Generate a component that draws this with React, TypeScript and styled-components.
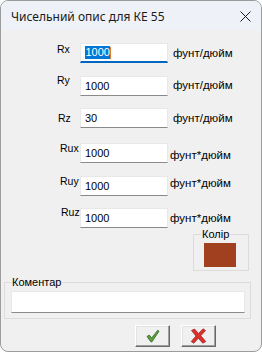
import React from "react";
import styled, { createGlobalStyle } from "styled-components";

const Global = createGlobalStyle`
  html, body { margin: 0; padding: 0; background: #ffffff; }
  * { box-sizing: border-box; }
`;

const Window = styled.div`
  width: 262px;
  height: 352px;
  border: 1px solid #9c9c9c;
  border-radius: 8px;
  overflow: hidden;
  background: #f0f0f0;
  display: flex;
  flex-direction: column;
  font-family: "Liberation Sans", Arial, sans-serif;
  font-size: 11px;
  color: #000;
`;

const TitleBar = styled.div`
  height: 29px;
  flex: none;
  background: #eef2f8;
  display: flex;
  align-items: center;
  justify-content: space-between;
  padding: 0 10px 0 10px;
`;

const Title = styled.span`
  font-family: "Noto Sans", "Open Sans", sans-serif;
  font-size: 12px;
  color: #1a1a1a;
  margin-top: 1px;
`;

const CloseIcon = styled.svg`
  width: 11px;
  height: 11px;
  margin-top: 1px;
`;

const Body = styled.div`
  flex: 1;
  display: flex;
  flex-direction: column;
  padding-top: 13px;
`;

const Row = styled.div<{ $gap: number }>`
  display: flex;
  align-items: flex-start;
  height: 20px;
  margin-top: ${(p) => p.$gap}px;
`;

const Label = styled.span<{ $x: number; $dy: number }>`
  width: 79px;
  flex: none;
  padding-left: ${(p) => p.$x - 1}px;
  margin-top: ${(p) => p.$dy}px;
  line-height: 13px;
  font-size: 10.5px;
  white-space: nowrap;
`;

const Edit = styled.div<{ $focus?: boolean; $w: number; $h: number }>`
  width: ${(p) => p.$w}px;
  height: ${(p) => p.$h}px;
  flex: none;
  background: #ffffff;
  border: 1px solid #e8e8e8;
  border-bottom: ${(p) => (p.$focus ? "2px solid #0067c0" : "1px solid #8a8a8a")};
  display: flex;
  align-items: center;
  padding-left: 4px;
  line-height: 13px;
`;

const Selected = styled.span`
  background: #0078d7;
  color: #ffffff;
  padding: 0 0.5px;
`;

const Caret = styled.span`
  display: inline-block;
  width: 1px;
  height: 12px;
  background: #e07a2a;
`;

const Unit = styled.span<{ $x: number; $dy: number }>`
  margin-left: ${(p) => p.$x - 168}px;
  margin-top: ${(p) => p.$dy}px;
  font-size: 11.5px;
  line-height: 13px;
  white-space: nowrap;
`;

const Group = styled.fieldset`
  margin: 0;
  border: 1px solid #dcdcdc;
  min-width: 0;
`;

const ColorGroup = styled(Group)`
  width: 56px;
  align-self: flex-end;
  margin-right: 12px;
  padding: 2px 0 3px 10px;
`;

const CommentGroup = styled(Group)`
  width: 247px;
  margin: 5px 0 0 3px;
  padding: 2px 0 5px 6px;
`;

const Legend = styled.legend<{ $shift: number }>`
  padding: 0 1px;
  margin-left: ${(p) => p.$shift}px;
  font-size: 11px;
  line-height: 13px;
`;

const Swatch = styled.div<{ $color: string }>`
  width: 32px;
  height: 24px;
  background: ${(p) => p.$color};
`;

const Buttons = styled.div`
  display: flex;
  gap: 11px;
  margin: 6px 0 0 134px;
`;

const Button = styled.button`
  width: 35px;
  height: 22px;
  padding: 0;
  background: #f0f0f0;
  border: 1px solid;
  border-color: #ffffff #696969 #696969 #ffffff;
  box-shadow: inset -1px -1px 0 #a0a0a0, inset 1px 1px 0 #e3e3e3;
  display: flex;
  align-items: center;
  justify-content: center;
`;

const rows = [
  { label: "Rx", lx: 57, ldy: 0, value: "1000", unit: "фунт/дюйм", ux: 173, udy: 4, gap: 0, focus: true },
  { label: "Ry", lx: 57, ldy: -2, value: "1000", unit: "фунт/дюйм", ux: 173, udy: 3, gap: 13 },
  { label: "Rz", lx: 58, ldy: 4, value: "30", unit: "фунт/дюйм", ux: 173, udy: 4, gap: 12 },
  { label: "Rux", lx: 60, ldy: -1, value: "1000", unit: "фунт*дюйм", ux: 170, udy: 6, gap: 15 },
  { label: "Ruy", lx: 60, ldy: -1, value: "1000", unit: "фунт*дюйм", ux: 170, udy: 1, gap: 13 },
  { label: "Ruz", lx: 61, ldy: -2, value: "1000", unit: "фунт*дюйм", ux: 170, udy: 4, gap: 12 },
];

export default function App() {
  return (
    <>
      <Global />
      <Window>
        <TitleBar>
          <Title>Чисельний опис для КЕ 55</Title>
          <CloseIcon viewBox="0 0 11 11">
            <path d="M0.5 0.5 L10.5 10.5 M10.5 0.5 L0.5 10.5" stroke="#1a1a1a" strokeWidth="1" fill="none" />
          </CloseIcon>
        </TitleBar>
        <Body>
          {rows.map((r) => (
            <Row key={r.label} $gap={r.gap}>
              <Label $x={r.lx} $dy={r.ldy}>{r.label}</Label>
              <Edit $w={88} $h={20} $focus={r.focus}>
                {r.focus ? (
                  <>
                    <Selected>{r.value}</Selected>
                    <Caret />
                  </>
                ) : (
                  r.value
                )}
              </Edit>
              <Unit $x={r.ux} $dy={r.udy}>{r.unit}</Unit>
            </Row>
          ))}
          <ColorGroup>
            <Legend $shift={-3}>Колір</Legend>
            <Swatch $color="#a0401f" />
          </ColorGroup>
          <CommentGroup>
            <Legend $shift={0}>Коментар</Legend>
            <Edit $w={234} $h={22} />
          </CommentGroup>
          <Buttons>
            <Button aria-label="OK">
              <svg width="14" height="14" viewBox="0 0 14 14">
                <path
                  d="M1 7.5 L3.2 6 L5.6 9 L11.8 1.2 L13 2.2 L6 12.8 L4.8 12.8 Z"
                  fill="#5e9e3f"
                  stroke="#2f6a22"
                  strokeWidth="0.8"
                  strokeLinejoin="round"
                />
              </svg>
            </Button>
            <Button aria-label="Cancel">
              <svg width="17" height="16" viewBox="0 0 17 16">
                <path
                  d="M1.5 2.5 L4.5 1 L8.5 5.5 L13 0.8 L15.5 2.5 L10.8 7.8 L15.8 13.5 L12.8 15.2 L8.3 10.2 L3.8 15.2 L1.2 13.6 L6 8 Z"
                  fill="#d9312c"
                  stroke="#9c1d1a"
                  strokeWidth="0.7"
                  strokeLinejoin="round"
                />
              </svg>
            </Button>
          </Buttons>
        </Body>
      </Window>
    </>
  );
}
